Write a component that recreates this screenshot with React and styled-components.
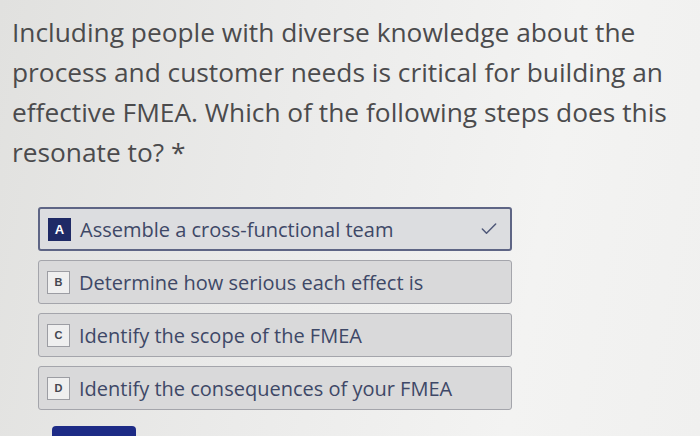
import React from "react";
import styled, { createGlobalStyle } from "styled-components";
import { Check } from "lucide-react";

const GlobalStyle = createGlobalStyle`
    html, body {
        margin: 0;
        padding: 0;
    }
    body {
        width: 700px;
        height: 436px;
        overflow: hidden;
        font-family: "Open Sans", "Noto Sans", sans-serif;
        background: linear-gradient(100deg, #e1e1df 0%, #ebebea 40%, #f3f3f2 75%, #f0f0ef 100%);
    }
`;

const Page = styled.div`
    height: 436px;
    padding: 12px 0 0 12px;
    box-sizing: border-box;
    display: flex;
    flex-direction: column;
`;

const Question = styled.p`
    margin: 0;
    width: 680px;
    font-size: 26.3px;
    line-height: 40px;
    color: #4b4b4d;
`;

const Options = styled.div`
    margin: 35px 0 0 26px;
    width: 474px;
    display: flex;
    flex-direction: column;
    gap: 9px;
`;

const Option = styled.div`
    height: 44px;
    box-sizing: border-box;
    display: flex;
    align-items: center;
    padding: 0 10px 0 8px;
    gap: 9px;
    border-radius: 3px;
    background-color: ${(p) => (p.$selected ? "#dcdde0" : "#d9d9da")};
    border: ${(p) => (p.$selected ? "2px solid #5e6585" : "1.5px solid #a4a5ab")};
    color: #3e4867;
    font-size: 20px;
`;

const Badge = styled.span`
    width: 23px;
    height: 23px;
    flex: none;
    box-sizing: border-box;
    display: flex;
    align-items: center;
    justify-content: center;
    font-family: "Liberation Sans", Arial, sans-serif;
    font-weight: bold;
    font-size: ${(p) => (p.$selected ? "13px" : "11px")};
    color: ${(p) => (p.$selected ? "#ffffff" : "#444650")};
    background-color: ${(p) => (p.$selected ? "#1f2a66" : "#efefef")};
    border: ${(p) => (p.$selected ? "none" : "1px solid #9c9da3")};
`;

const Label = styled.span`
    flex: 1;
    white-space: nowrap;
`;

const Tick = styled(Check)`
    color: #4f5879;
    flex: none;
    margin-right: 1px;
`;

const Submit = styled.div`
    margin: auto 0 0 40px;
    width: 84px;
    height: 10px;
    border-radius: 4px 4px 0 0;
    background-color: #1d2b86;
`;

const choices = [
    { key: "A", text: "Assemble a cross-functional team", selected: true },
    { key: "B", text: "Determine how serious each effect is" },
    { key: "C", text: "Identify the scope of the FMEA" },
    { key: "D", text: "Identify the consequences of your FMEA" },
];

const App = () => {
    return (
        <>
            <GlobalStyle />
            <Page>
                <Question>
                    Including people with diverse knowledge about the process and customer needs is
                    critical for building an effective FMEA. Which of the following steps does this
                    resonate to? *
                </Question>
                <Options>
                    {choices.map((c) => (
                        <Option key={c.key} $selected={c.selected}>
                            <Badge $selected={c.selected}>{c.key}</Badge>
                            <Label>{c.text}</Label>
                            {c.selected ? <Tick size={20} strokeWidth={1.8} /> : null}
                        </Option>
                    ))}
                </Options>
                <Submit />
            </Page>
        </>
    );
};

export default App;
